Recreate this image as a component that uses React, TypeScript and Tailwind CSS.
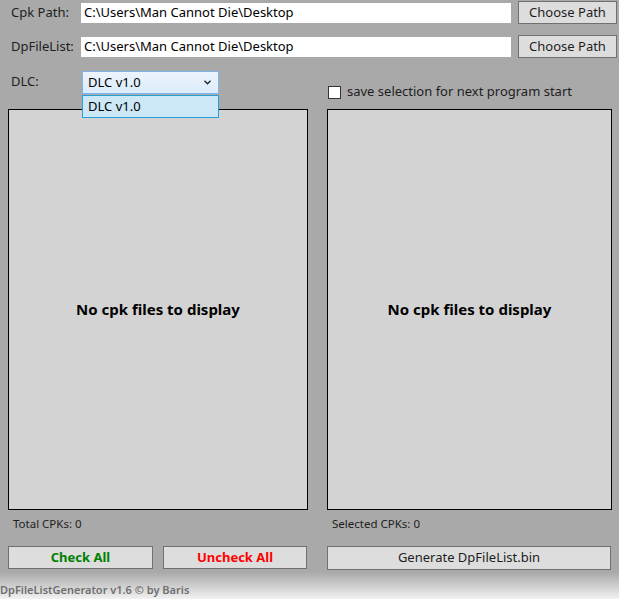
import React from "react";

const font = { fontFamily: '"Noto Sans", "Open Sans", sans-serif' };

const PathRow = ({ label, value, top }: { label: string; value: string; top: string }) => (
  <div className={`flex items-center h-[23px] ${top}`}>
    <span className="w-[81px] pl-[11px] text-[13px] text-[#1e1e1e]">{label}</span>
    <div className="w-[430px] h-[20px] bg-white flex items-center pl-[3px] text-[13px] text-black">{value}</div>
    <button className="ml-[7px] w-[99px] h-[23px] bg-[#dddddd] border border-[#707070] text-[13px] text-[#1e1e1e]">
      Choose Path
    </button>
  </div>
);

const EmptyList = ({ width }: { width: string }) => (
  <div className={`${width} h-[401px] bg-[#d3d3d3] border border-black flex items-center justify-center`}>
    <span className="text-[15px] font-bold text-black">No cpk files to display</span>
  </div>
);

export default function App() {
  return (
    <div className="w-[619px] h-[599px] bg-[#a9a9a9] relative overflow-hidden flex flex-col" style={font}>
      <PathRow label="Cpk Path:" value="C:\Users\Man Cannot Die\Desktop" top="mt-[1px]" />
      <PathRow label="DpFileList:" value="C:\Users\Man Cannot Die\Desktop" top="mt-[11px]" />

      {/* DLC picker row */}
      <div className="flex h-[38px] mt-[13px]">
        <span className="w-[82px] pl-[11px] text-[13px] text-[#1e1e1e] pt-[1px]">DLC:</span>
        <div className="w-[137px] h-[23px] border border-[#7eb4ea] bg-gradient-to-b from-[#ecf4fc] to-[#dcecfc] flex items-center pl-[5px] pr-[7px] text-[13px] text-black">
          <span className="flex-1">DLC v1.0</span>
          <svg width="7" height="5" viewBox="0 0 7 5">
            <path d="M0.5 0.8 L3.5 3.8 L6.5 0.8" fill="none" stroke="#222" strokeWidth="1.3" />
          </svg>
        </div>
        <label className="ml-[109px] mt-[14px] flex items-center h-[14px] text-[13px] text-[#1e1e1e]">
          <span className="w-[13px] h-[13px] bg-white border border-[#333] mr-[6px]" />
          save selection for next program start
        </label>
      </div>

      {/* file lists */}
      <div className="flex pl-[8px] gap-[19px]">
        <EmptyList width="w-[300px]" />
        <EmptyList width="w-[285px]" />
      </div>

      <div className="flex h-[28px] items-center text-[11.5px] text-[#1e1e1e]">
        <span className="w-[332px] pl-[13px]">Total CPKs: 0</span>
        <span>Selected CPKs: 0</span>
      </div>

      <div className="flex mt-[8px] pl-[8px] h-[24px]">
        <button className="w-[145px] h-[23px] bg-[#dddddd] border border-[#707070] text-[13px] font-bold text-[#008000]">
          Check All
        </button>
        <button className="ml-[10px] w-[144px] h-[23px] bg-[#dddddd] border border-[#707070] text-[13px] font-bold text-[#ff0000]">
          Uncheck All
        </button>
        <button className="ml-[20px] w-[284px] h-[24px] bg-[#dddddd] border border-[#707070] text-[13px] text-[#1e1e1e]">
          Generate DpFileList.bin
        </button>
      </div>

      {/* status footer */}
      <div className="flex-1 mt-[2px] bg-gradient-to-b from-[#a9a9a9] to-[#f2f2f2] flex items-end">
        <span className="text-[11px] font-semibold text-[#6e6e6e] leading-none pb-[4px]">
          DpFileListGenerator v1.6 © by Baris
        </span>
      </div>

      {/* open dropdown */}
      <div className="absolute left-[82px] top-[95px] w-[137px] h-[23px] bg-[#cce8f7] border border-[#26a0da] flex items-center pl-[5px] text-[13px] text-black">
        DLC v1.0
      </div>
    </div>
  );
}
